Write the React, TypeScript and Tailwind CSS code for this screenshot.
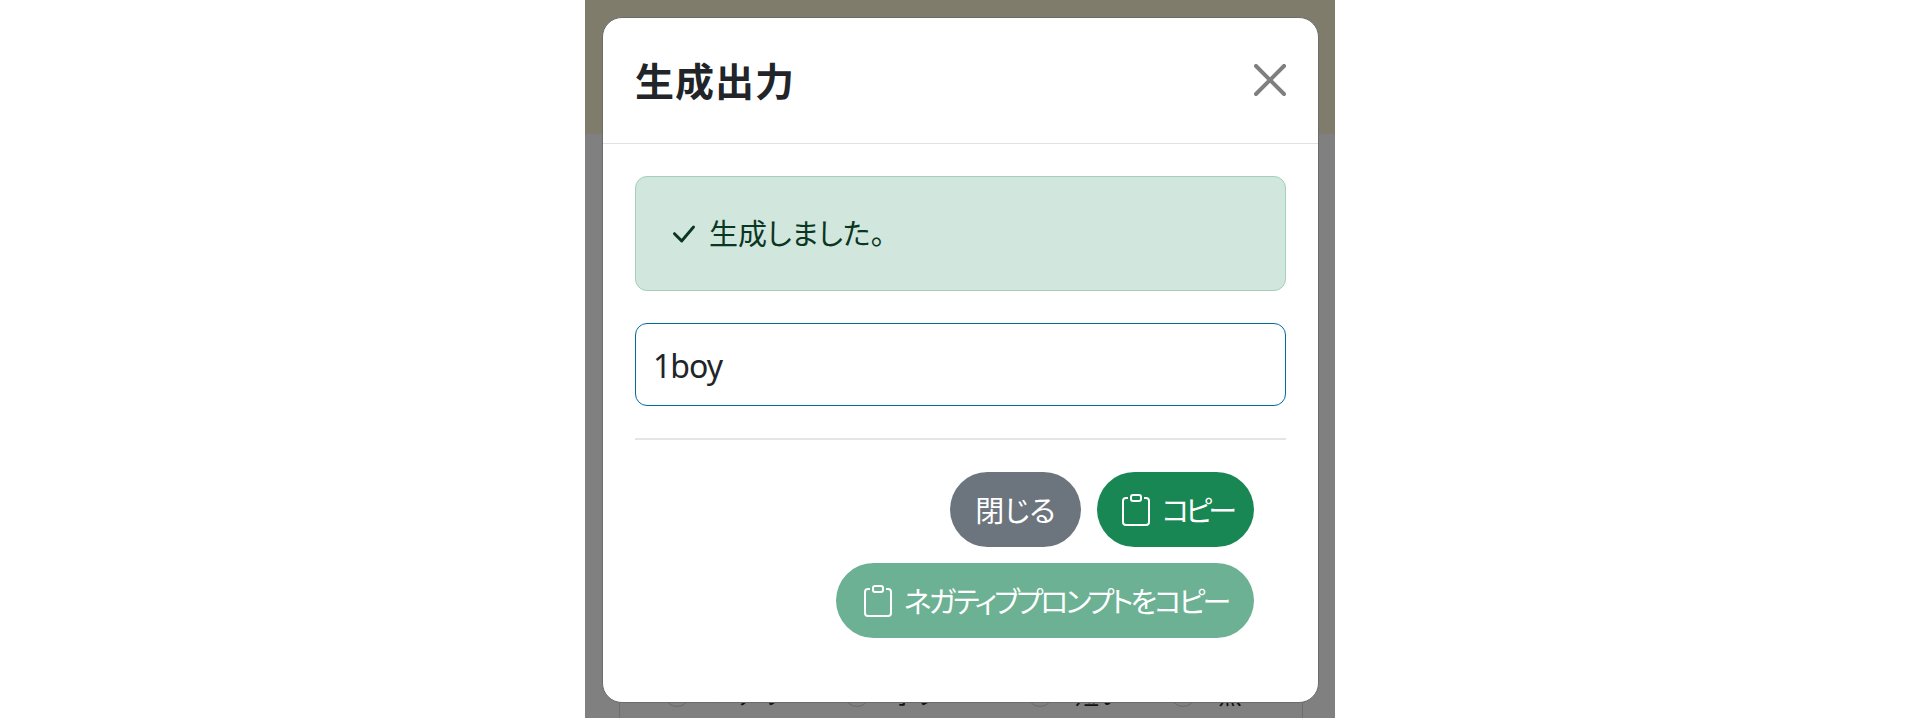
const jp = "font-['Noto_Sans_CJK_JP','Noto_Sans',sans-serif]";

const ClipboardIcon = () => (
  <svg viewBox="0 0 16 16" fill="currentColor" className="w-8 h-8 shrink-0">
    <path d="M4 1.5H3a2 2 0 0 0-2 2V14a2 2 0 0 0 2 2h10a2 2 0 0 0 2-2V3.5a2 2 0 0 0-2-2h-1v1h1a1 1 0 0 1 1 1V14a1 1 0 0 1-1 1H3a1 1 0 0 1-1-1V3.5a1 1 0 0 1 1-1h1z" />
    <path d="M9.5 1a.5.5 0 0 1 .5.5v1a.5.5 0 0 1-.5.5h-3a.5.5 0 0 1-.5-.5v-1a.5.5 0 0 1 .5-.5zm-3-1A1.5 1.5 0 0 0 5 1.5v1A1.5 1.5 0 0 0 6.5 4h3A1.5 1.5 0 0 0 11 2.5v-1A1.5 1.5 0 0 0 9.5 0z" />
  </svg>
);

const RadioOption = ({ label, width }: { label: string; width: string }) => (
  <div className={`${width} flex items-center gap-[22px]`}>
    <span className="w-[26px] h-[26px] rounded-full border border-[#6a6a6a] shrink-0" />
    <span>{label}</span>
  </div>
);

const Behind = () => (
  <div className="flex-1 bg-[#808080] pl-[34px] pr-[32px] flex flex-col justify-end">
    <div className="h-[60px] border-x border-[#6e6e6e] flex items-end pb-[9px] pl-[44px] text-[24px] leading-[30px] text-[#111]">
      <RadioOption label="エアリー" width="w-[180px]" />
      <RadioOption label="ボブ" width="w-[183px]" />
      <RadioOption label="短い" width="w-[143px]" />
      <RadioOption label="黒" width="w-[100px]" />
    </div>
  </div>
);

export default function App() {
  return (
    <div className={`${jp} h-[718px] bg-white flex justify-center overflow-hidden`}>
      <div className="relative w-[750px] mr-px flex flex-col">
        <div className="h-[134px] bg-[#7f7c6b]" />
        <Behind />

        <div className="absolute left-[17px] top-[17px] w-[717px] h-[686px] bg-white rounded-[20px] border border-[#6b6b6b] text-[#212529]">
          <div className="h-[126px] border-b border-[#dee2e6] flex items-center justify-between pl-[32px] pr-[32px]">
            <h1 className="text-[39px] leading-[50px] -mt-[3px] font-bold tracking-[1px] text-[#212529]">生成出力</h1>
            <svg viewBox="0 0 16 16" fill="#000" fillOpacity="0.5" className="w-8 h-8 -mt-[2px]">
              <path d="M.293.293a1 1 0 0 1 1.414 0L8 6.586 14.293.293a1 1 0 1 1 1.414 1.414L9.414 8l6.293 6.293a1 1 0 0 1-1.414 1.414L8 9.414l-6.293 6.293a1 1 0 0 1-1.414-1.414L6.586 8 .293 1.707a1 1 0 0 1 0-1.414z" />
            </svg>
          </div>

          <div className="px-[32px] pt-[32px]">
            <div className="h-[115px] rounded-[12px] border-[1.5px] border-[#a3cfbb] bg-[#d1e7dd] text-[#0a3622] flex items-center pl-[31px] gap-[10px] text-[29px] [font-feature-settings:'palt']">
              <svg viewBox="0 0 16 16" fill="currentColor" className="w-8 h-8 shrink-0">
                <path d="M12.736 3.97a.733.733 0 0 1 1.047 0c.286.289.29.756.01 1.05L7.88 12.01a.733.733 0 0 1-1.065.02L3.217 8.384a.757.757 0 0 1 0-1.06.733.733 0 0 1 1.047 0l3.052 3.093 5.4-6.425z" />
              </svg>
              <span className="-mt-[2px]">生成しました。</span>
            </div>

            <div className="mt-[32px] h-[83px] rounded-[12px] border-[1.5px] border-[#006d94] flex items-center pl-[17px] pt-[2px] text-[32px] font-['Noto_Sans',sans-serif] font-normal tracking-[-1px]">
              1boy
            </div>

            <div className="mt-[32px] border-t-2 border-[#e4e5e7]" />

            <div className="mt-[32px] pr-[32px] flex flex-wrap justify-end gap-[16px] text-white text-[29px] [font-feature-settings:'palt']">
              <button className="h-[75px] w-[131px] rounded-full bg-[#6c757d] flex items-center justify-center">閉じる</button>
              <button className="h-[75px] w-[157px] rounded-full bg-[#198754] flex items-center justify-center gap-[10px] tracking-[-4px] pl-[2px]">
                <ClipboardIcon />
                コピー
              </button>
              <button className="h-[75px] w-[418px] rounded-full bg-[#6cb193] flex items-center justify-center gap-[10px] tracking-[-3px]">
                <ClipboardIcon />
                ネガティブプロンプトをコピー
              </button>
            </div>
          </div>
        </div>
      </div>
    </div>
  );
}
